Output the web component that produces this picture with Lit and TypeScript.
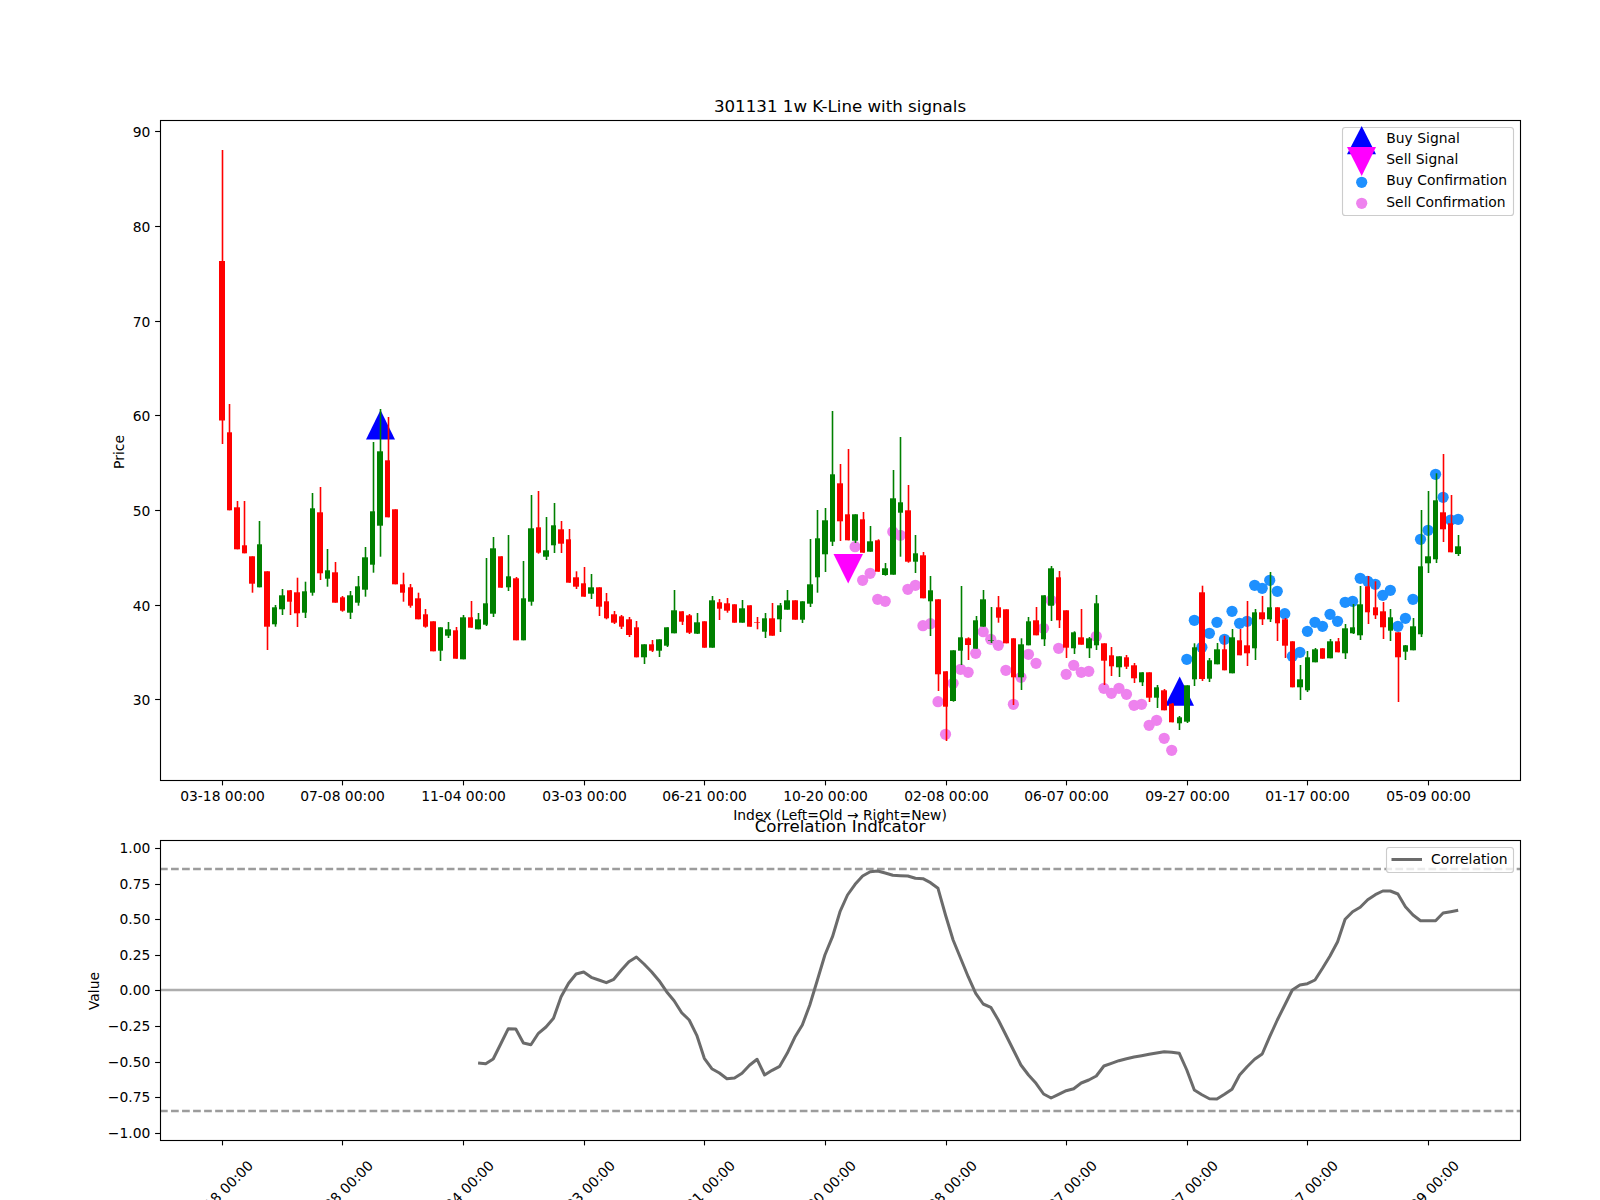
import { LitElement, html, svg, css } from "lit";
import { customElement } from "lit/decorators.js";

const R = 0, G = 1;
// colour, wick top, body top, body bottom, wick bottom (pixels)
const C: number[][] = [
[R,150,261,420.5,444],[R,404,432.3,510.3,510.3],[R,501,507.3,549.3,549.3],[R,501,545.3,553.3,553.3],[R,556.3,556.3,583.7,592.7],
[G,521,544.3,587.3,587.3],[R,571.3,571.3,626.7,650],[G,605,607.3,624.3,626.7],[G,589,595.3,609.3,615],[R,590,590.3,601.7,615],
[R,577.7,592.3,613.3,627],[G,581.7,591.3,612.7,618],[G,493,508.3,592.7,595.7],[R,487,512.3,573.3,580],[G,549,570.3,578.7,586.7],
[R,562,572.3,602.7,602.7],[R,596,597.3,610.7,611.7],[G,591,595.3,612.7,619],[G,576,586.3,602.7,605.7],[G,547,557.3,589.7,596.7],
[G,442,511.3,564.7,572.7],[G,409,451.3,525.7,556.7],[R,417,460.3,517.3,517.3],[R,509.3,509.3,584.3,584.3],[R,572.7,584.3,592.7,601.7],
[R,584,587.3,605.7,607.7],[R,592.7,598.3,619.3,619.3],[R,609,614.3,626.7,627.7],[R,621.3,621.3,651.3,651.3],[G,627.3,627.3,650.7,661],
[G,622,629.3,635.7,638],[R,627,630.3,658.7,658.7],[G,615,617.3,659.3,659.3],[R,601,617.3,627.7,627.7],[G,613,619.3,629.3,629.3],
[G,558,603.3,624.7,626],[G,537,548.3,613.7,617],[R,556.3,556.3,587.7,587.7],[G,535,576.3,587.3,591],[R,577,578.3,640.3,640.3],
[G,561,598.3,640.3,640.3],[G,495,528.3,601.7,605.7],[R,491,527.3,552.7,553.7],[G,517,550.3,556.7,560],[G,503,525.3,545.3,553],
[R,521,529.3,543.7,553],[R,529,539.3,582.7,582.7],[R,571.3,577.3,586.7,589],[R,567,583.3,596.7,596.7],[G,574,587.3,593.7,599],
[R,587.3,587.3,606.7,616],[R,593,601.3,618.3,619.3],[R,611,614.3,622.7,624],[R,615,616.3,626.7,629],[R,617,619.3,635,637],
[R,621,627.3,657.3,657.3],[G,644.3,644.3,657.3,664],[R,640,644.3,650.7,652],[G,639.3,639.3,650.7,657],[G,627.3,627.3,645.7,647],
[G,590,610.3,633.3,633.3],[R,611.3,611.3,621.7,625],[R,614,615.3,632.7,634],[G,613,622.3,633.7,634],[R,621.3,621.3,647.7,647.7],
[G,596,600.3,647.7,647.7],[R,599,602.3,608.7,620],[R,598,603.3,610.7,612.7],[R,604.3,604.3,622.7,622.7],[G,600,608.3,622.7,622.7],
[R,605.3,605.3,626.7,626.7],[R,617,622,622.6,629.3],[G,613,618.3,631.7,638],[R,603,618.3,635.7,635.7],[G,603,605.3,619.3,632],
[G,590,600.3,609.7,609.7],[R,600.3,600.3,619.7,619.7],[G,601.3,601.3,619.7,623],[G,539,584.3,603.7,607],[G,510,538.3,577.3,592.7],
[G,508,520.3,554.3,572],[G,411,474.3,541.7,546],[R,464,483.3,521.3,541],[R,449,514.3,540.3,540.3],[G,514.3,514.3,540.7,543],
[R,512,519.3,552.7,552.7],[G,526,541.3,551.7,551.7],[R,539.3,540.3,571.7,571.7],[G,563,568.3,575,575.7],[G,470,498.3,574.7,574.7],
[G,437,502.3,512.7,556.7],[R,485,510.3,561.7,562.7],[G,535,553.3,561.7,573],[R,552,555.3,598.3,598.3],[G,576,590.3,601.3,636],
[R,599.3,599.3,674.3,691],[R,671.3,671.3,706.7,741],[G,650.3,650.3,701,701.7],[G,586,637.3,650.7,665],[R,637.3,638.3,645,660],
[G,616,620.3,648.7,648.7],[G,590,599.3,626.7,626.7],[G,607,640,640.6,643],[R,596,607.3,617.7,622.7],[R,609.3,609.3,643.3,643.3],
[R,638.3,638.3,677.3,705],[G,638.3,644.3,677.3,690],[G,617,621.3,645.3,645.3],[R,607,620.3,635.3,635.3],[G,595.3,595.3,639.3,646],
[G,566,568.3,605.7,621],[R,571,577.3,620.3,628],[R,610.3,610.3,647.7,658],[G,631.3,632.3,648.3,654],[R,609,637.3,644.7,644.7],
[G,637,638.3,648.3,658],[G,595,603.3,645.3,650],[R,643.3,643.3,660.7,685],[R,647,655.3,666.3,676],[G,656.3,656.3,667.3,677],
[R,655,657.3,666.7,669],[R,663,665.3,678.3,683],[G,672.3,672.3,682.3,686],[R,672.3,672.3,697.7,702],[G,685,687.3,697.7,708],
[R,689,690.3,710.3,710.3],[R,703,703.7,722.3,722.3],[G,716,717.3,723.3,730],[G,685.3,685.3,721.7,723],[G,643.3,647.3,679.3,686],
[R,585.7,592.3,679,681],[G,658,660.3,678.7,682],[G,643,649.3,664.3,664.3],[R,635.7,649.3,670.3,670.3],[G,629,637.3,673.3,673.3],
[R,629,640.3,655.3,655.3],[R,601,645.3,653.3,666],[G,609,612.3,648.3,660],[R,596,612.3,619.3,625],[G,572,607.3,619.3,622],
[R,607.3,607.3,623.3,641],[R,618,619.3,645.7,658],[R,641.3,641.3,687.3,687.3],[G,665,679.3,687.3,700],[G,651,657.3,690.3,692],
[G,648,649.3,662.3,662.3],[R,648.3,648.3,658.7,658.7],[G,639,641.3,658.3,658.3],[R,638,641.3,652.3,652.3],[G,624,628.3,653.3,659],
[G,604,627.3,633.3,634],[G,586,604.3,635.3,640],[R,576,586.3,612.3,624],[R,581.3,607.3,615.3,619],[R,602,611.3,627.3,639],
[G,609,617.3,630.7,641],[R,632.3,632.3,657.3,702],[G,645,645.3,651.7,660],[G,618,626.3,650.3,650.3],[G,510,566.3,634.3,637],
[G,491,556.3,563.3,573],[G,473.3,500.3,559.3,563],[R,454,512.3,529.3,542],[R,495,523.3,552.3,552.3],[G,535,546.3,554,556],
];

const SELL: [number, number][] = [
[84,546.7],[85,580.3],[86,573.3],[87,599.3],[88,601.3],[89,531.7],[90,535.3],[91,589.3],[92,585.3],[93,625.7],[94,623.7],[95,701.7],[96,734.3],[97,683.3],[98,669.3],[99,672.3],[100,653.3],[101,631.7],[102,639.3],[103,645.3],[104,670.3],[105,704.3],[106,677.3],[107,654.3],[108,663.3],[109,628.3],[110,600.3],[111,648.3],[112,674.3],[113,665.3],[114,672.3],[115,671.3],[116,636.3],[117,688.3],[118,693.3],[119,688.3],[120,694.3],[121,705.3],[122,704.3],[123,725.3],[124,720.3],[125,738.3],[126,750.3],
];
const BUY: [number, number][] = [
[128,659.3],[129,620.3],[130,647.3],[131,633.3],[132,622.3],[133,639.3],[134,611.3],[135,623.3],[136,621.3],[137,585.3],[138,588.3],[139,580.3],[140,591.3],[141,613.7],[142,656.3],[143,652.3],[144,631.3],[145,622.3],[146,626.3],[147,614.3],[148,621.3],[149,602.3],[150,601.3],[151,578.3],[152,581.3],[153,584.3],[154,595.3],[155,590.3],[156,626.3],[157,618.3],[158,599.3],[159,539.3],[160,530.3],[161,474.3],[162,497.3],[163,520],[164,519.3],
];

// correlation, zoomed y (y = 790 + v / 3) from index 34
const CORR = [819,821,807,762,716,717,759,764,730,711,685,620,580,552,546,562,570,578,568,540,515,501,522,545,572,605,632,668,690,736,805,836,849,866,864,850,826,808,
855,841,829,790,742,705,645,570,495,440,365,315,283,258,245,243,249,256,257,258,265,266,278,295,375,450,505,560,610,642,652,690,735,780,825,855,880,912,924,913,902,896,879,870,858,828,820,812,806,801,797,793,789,785,787,790,840,900,914,926,927,913,898,855,830,808,792,740,690,645,600,585,581,570,535,498,455,388,365,352,329,314,303,303,312,350,375,392,392,392,369,365,361];

const X = (i: number) => 221.8 + 7.539 * i;
const snap = (x: number) => Math.floor(x + 0.5) + 0.5;

const TOP_LABELS = ["03-18 00:00","07-08 00:00","11-04 00:00","03-03 00:00","06-21 00:00","10-20 00:00","02-08 00:00","06-07 00:00","09-27 00:00","01-17 00:00","05-09 00:00"];
const PRICE_TICKS: [string, number][] = [["90",131.5],["80",226.5],["70",321.5],["60",415.5],["50",510.5],["40",605.5],["30",699.5]];
const VALUE_TICKS: [string, number][] = [["1.00",848.5],["0.75",884.5],["0.50",919.5],["0.25",955.5],["0.00",990.5],["\u22120.25",1026.5],["\u22120.50",1062.5],["\u22120.75",1097.5],["\u22121.00",1133.5]];

@customElement("app-root")
export class AppRoot extends LitElement {
  static styles = css`
    :host { display: block; width: 1600px; height: 1200px; background: #fff; overflow: hidden; }
    svg { display: block; }
    text { font-family: "DejaVu Sans", sans-serif; font-size: 13.89px; fill: #000; }
    .title { font-size: 16.67px; text-anchor: middle; }
    .mid { text-anchor: middle; }
    .end { text-anchor: end; }
    .frame { fill: none; stroke: #000; stroke-width: 1.11; }
    .tickline { stroke: #000; stroke-width: 1.11; fill: none; }
    .red { stroke: #f00; fill: #f00; }
    .green { stroke: #008000; fill: #008000; }
    .wick { stroke-width: 1.6; fill: none; }
    .body { stroke: none; }
    .buy-dot { fill: #1e90ff; }
    .sell-dot { fill: #ee82ee; }
    .buy-tri { fill: #00f; }
    .sell-tri { fill: #f0f; }
    .legend { fill: rgba(255,255,255,.8); stroke: #ccc; stroke-width: 1.11; }
    .level { stroke: #9c9c9c; stroke-width: 2.3; stroke-dasharray: 7.7 3.33; fill: none; }
    .zero { stroke: #adadad; stroke-width: 2.6; fill: none; }
    .corr { stroke: #6b6b6b; stroke-width: 3; fill: none; stroke-linejoin: round; }
  `;

  private candle(c: number[], i: number) {
    const x = X(i), cls = c[0] === R ? "red" : "green";
    const sx = snap(x);
    const left = Math.round(x - 2.75);
    const right = Math.round(x + 2.75);
    return svg`<line class="wick ${cls}" x1=${sx} x2=${sx} y1=${c[1]} y2=${c[4]}></line>
      ${c[3] > c[2] ? svg`<rect class="body ${cls}" x=${left} y=${c[2]} width=${right - left} height=${c[3] - c[2]}></rect>` : null}`;
  }

  render() {
    const ticksX = TOP_LABELS.map((l, k) => ({ l, x: snap(X(16 * k)) }));
    const corrPts = CORR.map((v, k) => `${X(34 + k).toFixed(1)},${(790 + v / 3).toFixed(1)}`).join(" ");
    return html`<svg width="1600" height="1200" viewBox="0 0 1600 1200">
      <text class="title" x="840" y="111.7">301131 1w K-Line with signals</text>

      ${SELL.map(([i, y]) => svg`<circle class="sell-dot" cx=${X(i)} cy=${y} r="5.6"></circle>`)}
      ${BUY.map(([i, y]) => svg`<circle class="buy-dot" cx=${X(i)} cy=${y} r="5.6"></circle>`)}
      <polygon class="buy-tri" points="366,439.5 380.5,410 395,439.5"></polygon>
      <polygon class="buy-tri" points="1165,705.7 1179.7,676.5 1194,705.7"></polygon>
      <polygon class="sell-tri" points="833.5,554 863,554 848.2,583.5"></polygon>
      ${C.map((c, i) => this.candle(c, i))}
      <rect class="frame" x="160.5" y="120.5" width="1360" height="660"></rect>

      ${PRICE_TICKS.map(([l, y]) => svg`<line class="tickline" x1="155.1" x2="160" y1=${y} y2=${y}></line>
        <text class="end" x="150.3" y=${y + 5.5}>${l}</text>`)}
      ${ticksX.map(t => svg`<line class="tickline" x1=${t.x} x2=${t.x} y1="781" y2="785.4"></line>
        <text class="mid" x=${t.x} y="801">${t.l}</text>`)}
      <text class="mid" x="840" y="820">Index (Left=Old → Right=New)</text>
      <text class="mid" transform="translate(124 452) rotate(-90)">Price</text>

      <rect class="legend" x="1342.5" y="127.5" width="171" height="88" rx="2.8"></rect>
      <polygon class="buy-tri" points="1347,154.3 1361.7,126 1376,154.3"></polygon>
      <polygon class="sell-tri" points="1347,147 1376,147 1361.7,176"></polygon>
      <circle class="buy-dot" cx="1361.7" cy="182.3" r="5.6"></circle>
      <circle class="sell-dot" cx="1361.7" cy="203.3" r="5.6"></circle>
      <text x="1386.3" y="143">Buy Signal</text>
      <text x="1386.3" y="164">Sell Signal</text>
      <text x="1386.3" y="185">Buy Confirmation</text>
      <text x="1386.3" y="206.5">Sell Confirmation</text>

      <text class="title" x="840" y="831.7">Correlation Indicator</text>
      <line class="level" x1="160" x2="1520" y1="869" y2="869"></line>
      <line class="level" x1="160" x2="1520" y1="1111" y2="1111"></line>
      <line class="zero" x1="160" x2="1520" y1="990" y2="990"></line>
      <polyline class="corr" points=${corrPts}></polyline>
      <rect class="frame" x="160.5" y="840.5" width="1360" height="300"></rect>
      ${VALUE_TICKS.map(([l, y]) => svg`<line class="tickline" x1="155.1" x2="160" y1=${y} y2=${y}></line>
        <text class="end" x="150.3" y=${y + 4.7}>${l}</text>`)}
      ${ticksX.map(t => svg`<line class="tickline" x1=${t.x} x2=${t.x} y1="1141" y2="1145.4"></line>
        <text class="mid" transform="translate(${t.x + 1.5} 1196.5) rotate(-45)">${t.l}</text>`)}
      <text class="mid" transform="translate(99 991) rotate(-90)">Value</text>
      <rect class="legend" x="1386.5" y="847.5" width="127" height="25" rx="2.8"></rect>
      <line class="corr" x1="1391.5" x2="1422" y1="859.5" y2="859.5"></line>
      <text x="1431" y="863.5">Correlation</text>
    </svg>`;
  }
}
